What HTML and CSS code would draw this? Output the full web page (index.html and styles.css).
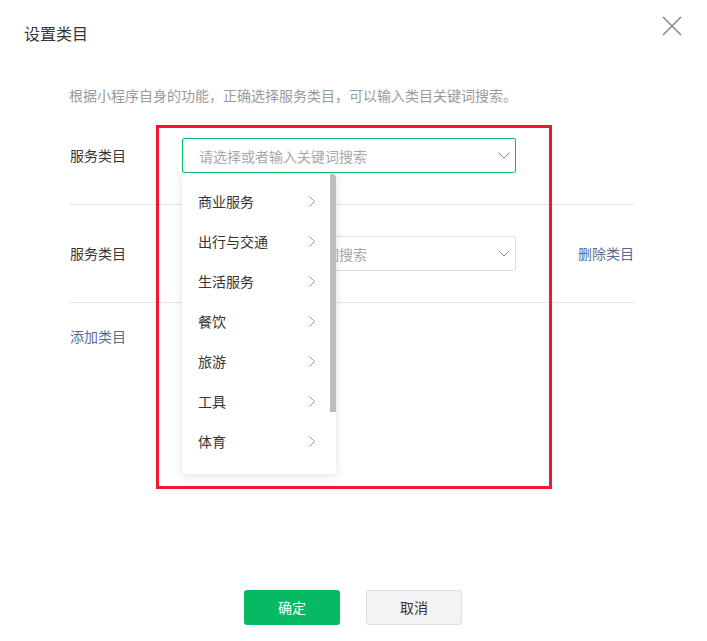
FILE: index.html
```html
<!DOCTYPE html>
<html lang="zh-CN">
<head>
	<meta charset="UTF-8" />
	<title>设置类目</title>
	<link rel="stylesheet" href="styles.css">
</head>
<body>
	<div class="dialog">
		<div class="dialog-hd">
			<div class="dialog-title">设置类目</div>
			<span class="close">
				<svg width="20" height="20" viewBox="0 0 20 20"><path d="M1 1L19 19M19 1L1 19" stroke="#808080" stroke-width="1.4" fill="none" /></svg>
			</span>
		</div>
		<div class="dialog-bd">
			<div class="tips">根据小程序自身的功能，正确选择服务类目，可以输入类目关键词搜索。</div>

			<div class="row">
				<div class="label">服务类目</div>
				<div class="select focus">
					<span class="placeholder">请选择或者输入关键词搜索</span>
					<svg class="arrow" width="12" height="7" viewBox="0 0 12 7"><path d="M0.5 0.5L6 6L11.5 0.5" stroke="#888" stroke-width="1" fill="none" /></svg>
					<div class="menu">
						<div class="item">商业服务<svg width="6" height="11" viewBox="0 0 6 11"><path d="M0.5 0.5L5.5 5.5L0.5 10.5" stroke="#999" fill="none" /></svg></div>
						<div class="item">出行与交通<svg width="6" height="11" viewBox="0 0 6 11"><path d="M0.5 0.5L5.5 5.5L0.5 10.5" stroke="#999" fill="none" /></svg></div>
						<div class="item">生活服务<svg width="6" height="11" viewBox="0 0 6 11"><path d="M0.5 0.5L5.5 5.5L0.5 10.5" stroke="#999" fill="none" /></svg></div>
						<div class="item">餐饮<svg width="6" height="11" viewBox="0 0 6 11"><path d="M0.5 0.5L5.5 5.5L0.5 10.5" stroke="#999" fill="none" /></svg></div>
						<div class="item">旅游<svg width="6" height="11" viewBox="0 0 6 11"><path d="M0.5 0.5L5.5 5.5L0.5 10.5" stroke="#999" fill="none" /></svg></div>
						<div class="item">工具<svg width="6" height="11" viewBox="0 0 6 11"><path d="M0.5 0.5L5.5 5.5L0.5 10.5" stroke="#999" fill="none" /></svg></div>
						<div class="item">体育<svg width="6" height="11" viewBox="0 0 6 11"><path d="M0.5 0.5L5.5 5.5L0.5 10.5" stroke="#999" fill="none" /></svg></div>
						<div class="scroll-thumb"></div>
					</div>
				</div>
			</div>

			<div class="row">
				<div class="label">服务类目</div>
				<div class="select">
					<span class="placeholder">请选择或者输入关键词搜索</span>
					<svg class="arrow" width="12" height="7" viewBox="0 0 12 7"><path d="M0.5 0.5L6 6L11.5 0.5" stroke="#888" stroke-width="1" fill="none" /></svg>
				</div>
				<a class="link del">删除类目</a>
			</div>

			<div class="add"><a class="link">添加类目</a></div>
		</div>
		<div class="dialog-ft">
			<a class="btn btn-primary">确定</a>
			<a class="btn btn-default">取消</a>
		</div>
		<div class="mark"></div>
	</div>
</body>
</html>
```

FILE: styles.css
```css
body {
	margin: 0;
	font: 14px "Noto Sans CJK SC", "Liberation Sans", sans-serif;
	color: #353535;
	background: #fff;
}

.dialog {
	position: relative;
	width: 707px;
	height: 641px;
	display: flex;
	flex-direction: column;
}

.dialog-hd {
	padding: 24px 24px 24px 24px;
	line-height: 20px;
	position: relative;
}

.dialog-title {
	font-size: 16px;
	line-height: 20px;
	margin-top: -1px;
}

.close {
	position: absolute;
	right: 25px;
	top: 16px;
}

.dialog-bd {
	padding: 18px 73px 0 69px;
}

.tips {
	line-height: 20px;
	color: #9a9a9a;
	margin-bottom: 2px;
}

.row {
	display: flex;
	align-items: center;
	padding: 31px 0 31px 0;
	border-bottom: 1px solid #e4e4e4;
}

.label {
	width: 112px;
	padding-left: 1px;
	line-height: 20px;
	margin-top: -2px;
}

.select {
	position: relative;
	box-sizing: border-box;
	width: 334px;
	height: 35px;
	border: 1px solid #dde0e5;
	border-radius: 2px;
	display: flex;
	align-items: center;
	padding: 0 16px;
}

.select.focus {
	border-color: #07c160;
}

.placeholder {
	flex: 1;
	color: #a8a8a8;
	margin-top: 1px;
}

.arrow {
	margin-right: -11px;
}

.menu {
	position: absolute;
	left: -1px;
	top: 35px;
	width: 154px;
	height: 300px;
	box-sizing: border-box;
	padding: 7px 0 0 0;
	background: #fff;
	border-radius: 0 4px 4px 4px;
	box-shadow: 0 2px 10px rgba(0, 0, 0, 0.12);
	z-index: 2;
}

.item {
	height: 40px;
	display: flex;
	align-items: center;
	justify-content: space-between;
	padding: 0 21px 0 16px;
	color: #353535;
}

.scroll-thumb {
	position: absolute;
	right: 0;
	top: 0;
	width: 6px;
	height: 238px;
	background: #bdbdbd;
	border-radius: 0 4px 0 0;
}

.link {
	color: #576b95;
	text-decoration: none;
}

.del {
	margin-left: auto;
	line-height: 20px;
	margin-top: -2px;
}

.add {
	padding-top: 23px;
	line-height: 20px;
	padding-left: 1px;
}

.dialog-ft {
	margin-top: auto;
	display: flex;
	justify-content: center;
	gap: 26px;
	padding: 0 0 16px 0;
}

.btn {
	box-sizing: border-box;
	width: 96px;
	height: 35px;
	line-height: 33px;
	text-align: center;
	border-radius: 3px;
	border: 1px solid transparent;
}

.btn-primary {
	background: #07b962;
	color: #fff;
	margin-left: -1px;
}

.btn-default {
	background: #f3f3f5;
	border-color: #dedfe2;
	color: #353535;
}

.mark {
	position: absolute;
	left: 156px;
	top: 125px;
	width: 396px;
	height: 364px;
	box-sizing: border-box;
	border: 3px solid #f3172f;
	pointer-events: none;
	z-index: 3;
}
```
